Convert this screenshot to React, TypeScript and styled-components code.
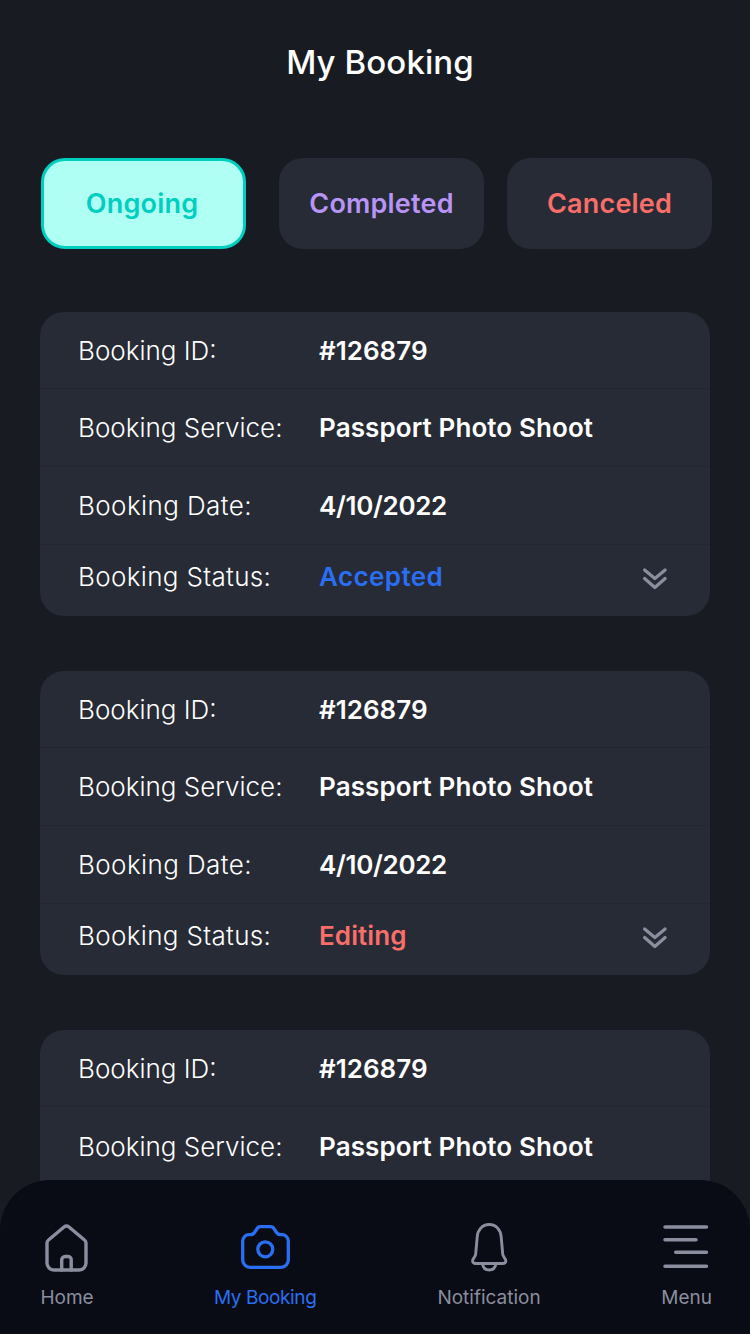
import styled, { createGlobalStyle } from "styled-components";

const GlobalStyle = createGlobalStyle`
  html, body {
    margin: 0;
    padding: 0;
    background: #181b22;
  }
  * {
    box-sizing: border-box;
  }
`;

const Screen = styled.div`
  position: relative;
  width: 750px;
  height: 1334px;
  overflow: hidden;
  background: #181b22;
  color: #fff;
  font-family: Inter, "Liberation Sans", sans-serif;
`;

const Title = styled.h1`
  margin: 0;
  padding: 40px 0 0 10px;
  height: 158px;
  text-align: center;
  font-size: 33px;
  line-height: 44px;
  font-weight: 500;
  letter-spacing: 0.1px;
`;

const Tabs = styled.div`
  display: flex;
  padding-left: 41px;
  margin-bottom: 63px;
`;

const Tab = styled.div<{ $color: string; $active?: boolean; $gap: number }>`
  width: 205px;
  height: 91px;
  margin-right: ${(p) => p.$gap}px;
  padding-right: ${(p) => (p.$active ? 3 : 0)}px;
  display: flex;
  align-items: center;
  justify-content: center;
  border-radius: 24px;
  font-size: 27px;
  font-weight: 600;
  letter-spacing: 0.2px;
  color: ${(p) => p.$color};
  background: ${(p) => (p.$active ? "#b0fff5" : "#272b35")};
  border: ${(p) => (p.$active ? "3.5px solid #00cfc0" : "none")};
`;

const Cards = styled.div`
  display: flex;
  flex-direction: column;
  gap: 55px;
  padding: 0 40px;
`;

const Card = styled.section`
  height: 304px;
  border-radius: 24px;
  background: #272b35;
  display: flex;
  flex-direction: column;
`;

const Row = styled.div<{ $height: number }>`
  height: ${(p) => p.$height}px;
  flex: none;
  display: flex;
  align-items: center;
  padding: 0 42px 0 38px;
  font-size: 26px;
  border-bottom: 1px solid #23262f;

  &:last-child {
    border-bottom: none;
  }
`;

const Label = styled.span<{ $tracking?: number }>`
  width: 241px;
  flex: none;
  font-weight: 300;
  color: #fff;
  letter-spacing: ${(p) => p.$tracking ?? 0}px;
`;

const Value = styled.span<{ $color?: string; $tracking?: number }>`
  flex: 1;
  font-weight: 600;
  color: ${(p) => p.$color ?? "#fff"};
  letter-spacing: ${(p) => p.$tracking ?? 0}px;
`;

const ChevronIcon = styled.svg`
  display: block;
  margin-top: 6px;
  fill: none;
  stroke: #8b8e9f;
  stroke-width: 3.2;
  stroke-linecap: round;
  stroke-linejoin: round;
`;

const Nav = styled.nav`
  position: absolute;
  left: 0;
  right: 0;
  bottom: 0;
  height: 154px;
  padding: 42px 0 0 37px;
  border-radius: 50px 50px 0 0;
  background: #090c14;
  display: flex;
`;

const NavItem = styled.div<{ $active?: boolean; $offset?: number }>`
  margin-left: ${(p) => p.$offset ?? 0}px;
  display: flex;
  flex-direction: column;
  align-items: center;
  color: ${(p) => (p.$active ? "#2a6ff3" : "#8b8e9f")};
`;

const NavLabel = styled.span<{ $tracking?: number }>`
  font-size: 19px;
  line-height: 28px;
  letter-spacing: ${(p) => p.$tracking ?? 0}px;
  white-space: nowrap;
`;

const NavIcon = styled.svg`
  display: block;
  width: 60px;
  height: 56px;
  margin-bottom: 6px;
  fill: none;
  stroke: currentColor;
  stroke-linecap: round;
  stroke-linejoin: round;
`;

const Chevrons = () => (
  <ChevronIcon width="28" height="26" viewBox="0 0 28 26">
    <path d="M4.600 4l10.250 8.500L25.100 4" />
    <path d="M4.600 12.500l10.250 9 10.250-9" />
  </ChevronIcon>
);

// the third card runs under the nav, only its first two rows show
const bookings = [
  { status: "Accepted", color: "#2a6ff3", tracking: 0.4 },
  { status: "Editing", color: "#fa6e69", tracking: 0.1 },
  { status: null, color: "", tracking: 0 },
];

export default function App() {
  return (
    <Screen>
      <GlobalStyle />
      <Title>My Booking</Title>
      <Tabs>
        <Tab $active $color="#00cfc0" $gap={33}>Ongoing</Tab>
        <Tab $color="#b794f6" $gap={23}>Completed</Tab>
        <Tab $color="#fa6e69" $gap={0}>Canceled</Tab>
      </Tabs>
      <Cards>
        {bookings.map((b, i) => (
          <Card key={i}>
            <Row $height={77}>
              <Label>Booking ID:</Label>
              <Value>#126879</Value>
            </Row>
            <Row $height={78}>
              <Label>Booking Service:</Label>
              <Value $tracking={0.1}>Passport Photo Shoot</Value>
            </Row>
            {b.status && (
              <>
                <Row $height={78}>
                  <Label $tracking={0.4}>Booking Date:</Label>
                  <Value $tracking={-0.33}>4/10/2022</Value>
                </Row>
                <Row $height={62}>
                  <Label $tracking={0.33}>Booking Status:</Label>
                  <Value $color={b.color} $tracking={b.tracking}>{b.status}</Value>
                  <Chevrons />
                </Row>
              </>
            )}
          </Card>
        ))}
      </Cards>
      <Nav>
        <NavItem>
          <NavIcon viewBox="0 0 60 56" strokeWidth="3.4">
            <path d="M10 21a4 4 0 0 1 1.500-3L27 5a4 4 0 0 1 5 0l15.500 13a4 4 0 0 1 1.500 3v20a7 7 0 0 1-7 7H17a7 7 0 0 1-7-7z" />
            <path d="M24.700 48V38a3.500 3.500 0 0 1 3.500-3.500h3a3 3 0 0 1 3 3.500V48" />
          </NavIcon>
          <NavLabel>Home</NavLabel>
        </NavItem>
        <NavItem $active $offset={117}>
          <NavIcon viewBox="-1 0 60 56" strokeWidth="3.3">
            <path d="M13 12.700h1.500a5 5 0 0 0 4-2.200l2-3a5 5 0 0 1 4-2.800h10a5 5 0 0 1 4 2.800l2 3a5 5 0 0 0 4 2.200H46a6.300 6.300 0 0 1 6.300 6.300V38a7.300 7.300 0 0 1-7.300 7.300H14A7.300 7.300 0 0 1 6.700 38V19A6.300 6.300 0 0 1 13 12.700z" />
            <circle cx="29.300" cy="27.300" r="7.500" />
          </NavIcon>
          <NavLabel $tracking={-0.4}>My Booking</NavLabel>
        </NavItem>
        <NavItem $offset={121}>
          <NavIcon viewBox="0 0 60 56" strokeWidth="2.9">
            <path d="M30.200 2.500c-7 0-11.500 5.500-12 12.500l-1.500 17c-.3 3-2.500 4-3 6-.5 2 .8 3.500 3 3.500h27c2.200 0 3.500-1.500 3-3.500-.5-2-2.700-3-3-6L42.200 15c-.5-7-5-12.500-12-12.500z" />
            <path d="M23.500 41.500c.5 4 3 6.500 6.700 6.500s6.200-2.500 6.700-6.500" />
          </NavIcon>
          <NavLabel>Notification</NavLabel>
        </NavItem>
        <NavItem $offset={116}>
          <NavIcon viewBox="0 0 60 56" strokeWidth="3.5">
            <path d="M8 5h41.500M8 17.700h31M18.700 30.300h30.800M8 44.300h41.500" />
          </NavIcon>
          <NavLabel>Menu</NavLabel>
        </NavItem>
      </Nav>
    </Screen>
  );
}
